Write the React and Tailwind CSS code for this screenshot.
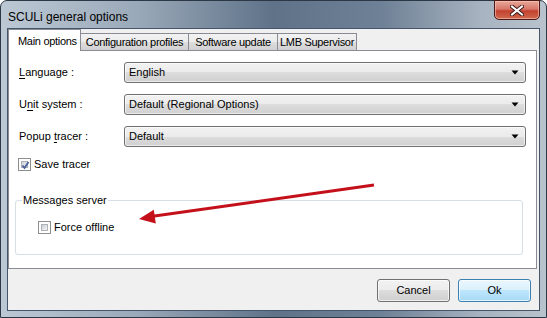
import React from "react";

const comboRows = [
  { pre: "", key: "L", post: "anguage :", value: "English" },
  { pre: "U", key: "n", post: "it system :", value: "Default (Regional Options)" },
  { pre: "Popup ", key: "t", post: "racer :", value: "Default" },
];

const tabs = ["Configuration profiles", "Software update", "LMB Supervisor"];
const tabWidths = ["w-[109px]", "w-[90px]", "w-[80px]"];

const DownArrow = () => (
  <svg width="8" height="5" viewBox="0 0 8 5">
    <path d="M0.5 0.5h7l-3.5 4z" fill="#000" />
  </svg>
);

const Combo = ({ value }) => (
  <div className="flex-1 h-[21px] flex items-center justify-between pl-[4px] pr-[6px] border border-[#707070] rounded-[3px] bg-[linear-gradient(to_bottom,#f2f2f2_0%,#ebebeb_50%,#dddddd_50%,#cfcfcf_100%)] shadow-[inset_0_0_0_1px_rgba(255,255,255,0.6)]">
    <span>{value}</span>
    <DownArrow />
  </div>
);

const CheckBox = ({ checked }) => (
  <div className="w-[13px] h-[13px] border border-[#8e8f8f] bg-white p-[2px] shrink-0">
    <div className="w-full h-full border border-[#aeb3b9] bg-[linear-gradient(135deg,#cbcfd5,#f6f6f6)] relative">
      {checked && (
        <svg width="11" height="11" viewBox="0 0 11 11" className="absolute -left-[2px] -top-[2px]">
          <path d="M2.5 5.5l2 2.5 4-6" fill="none" stroke="#4a5f97" strokeWidth="1.8" />
        </svg>
      )}
    </div>
  </div>
);

const Button = ({ label, primary }) => (
  <div
    className={
      "w-[73px] h-[23px] rounded-[3px] border flex items-center justify-center shadow-[inset_0_0_0_1px_rgba(255,255,255,0.7)] " +
      (primary
        ? "border-[#3c7fb1] bg-[linear-gradient(to_bottom,#eaf6fd_0%,#d9f0fc_50%,#bee6fd_50%,#a7d9f5_100%)]"
        : "border-[#707070] bg-[linear-gradient(to_bottom,#f2f2f2_0%,#ebebeb_50%,#dddddd_50%,#cfcfcf_100%)]")
    }
  >
    {label}
  </div>
);

export default function App() {
  return (
    <div className="relative w-[547px] h-[318px] flex flex-col rounded-t-[7px] border border-[#2c3846] bg-[linear-gradient(to_right,#bcc8d4_0%,#9aa9b9_25%,#5f7288_50%,#6f8196_70%,#a7b3c0_88%,#b9c3cd_100%)] font-['Liberation_Sans',Arial,sans-serif] text-[11px] text-black">
      {/* title bar */}
      <div className="h-[27px] flex items-start justify-between pl-[7px] pr-[6px]">
        <span className="text-[12px] mt-[7px] text-black">SCULi general options</span>
        <div className="-mt-px w-[46px] h-[20px] rounded-b-[5px] border border-[#4a1a14] bg-[linear-gradient(to_bottom,#e8a898_0%,#d7776a_45%,#c4412f_55%,#cf6a4e_100%)] shadow-[inset_0_0_0_1px_rgba(255,200,190,0.6)] flex items-center justify-center">
          <svg width="14" height="11" viewBox="0 0 14 11">
            <path d="M2 1.5l10 8M12 1.5l-10 8" stroke="#3b1a16" strokeWidth="4" strokeLinecap="square" />
            <path d="M2 1.5l10 8M12 1.5l-10 8" stroke="#fff" strokeWidth="2" strokeLinecap="square" />
          </svg>
        </div>
      </div>

      {/* client area */}
      <div className="mx-[6px] h-[283px] border border-[#46566a] bg-[#f0f0f0] flex flex-col">
        {/* tabs */}
        <div className="h-[22px] flex items-end whitespace-nowrap tracking-[-0.3px]">
          <div className="relative z-10 w-[73px] h-[22px] border-x border-t border-[#898c95] bg-white flex items-start pl-[9px] pt-[3px]">
            Main options
          </div>
          {tabs.map((t, i) => (
            <div
              key={t}
              className={
                "-ml-px h-[18px] border-x border-t border-[#898c95] bg-[linear-gradient(to_bottom,#f2f2f2_0%,#ebebeb_50%,#dddddd_50%,#cfcfcf_100%)] flex items-center justify-center " +
                tabWidths[i]
              }
            >
              {t}
            </div>
          ))}
        </div>

        {/* tab panel */}
        <div className="-mt-px w-[529px] h-[219px] border border-[#898c95] bg-white pt-[11px] pl-[10px] pr-[10px] flex flex-col">
          <div className="flex flex-col gap-[11px]">
            {comboRows.map((r) => (
              <div key={r.value} className="flex items-center">
                <div className="w-[105px]">
                  {r.pre}
                  <span className="underline underline-offset-2">{r.key}</span>
                  {r.post}
                </div>
                <Combo value={r.value} />
              </div>
            ))}
          </div>

          <div className="mt-[11px] -ml-px flex items-center gap-[3px] h-[13px]">
            <CheckBox checked />
            <span>Save tracer</span>
          </div>

          <fieldset className="mt-[23px] -ml-[4px] mr-[3px] h-[61px] border border-[#d5dfe5] rounded-[3px] pl-[6px]">
            <legend className="px-[1px] leading-[13px]">Messages server</legend>
            <div className="mt-[14px] ml-[16px] flex items-center gap-[3px] h-[13px]">
              <CheckBox />
              <span>Force offline</span>
            </div>
          </fieldset>
        </div>

        {/* buttons */}
        <div className="mt-[10px] pr-[8px] flex justify-end gap-[8px]">
          <Button label="Cancel" />
          <Button label="Ok" primary />
        </div>
      </div>

      {/* annotation arrow */}
      <svg className="absolute left-0 top-0 pointer-events-none" width="547" height="318" viewBox="0 0 547 318">
        <line x1="373" y1="184" x2="150" y2="215.5" stroke="#c4101b" strokeWidth="3" />
        <path d="M138 218L152.8 208.8L154.8 222.6Z" fill="#c4101b" />
      </svg>
    </div>
  );
}
